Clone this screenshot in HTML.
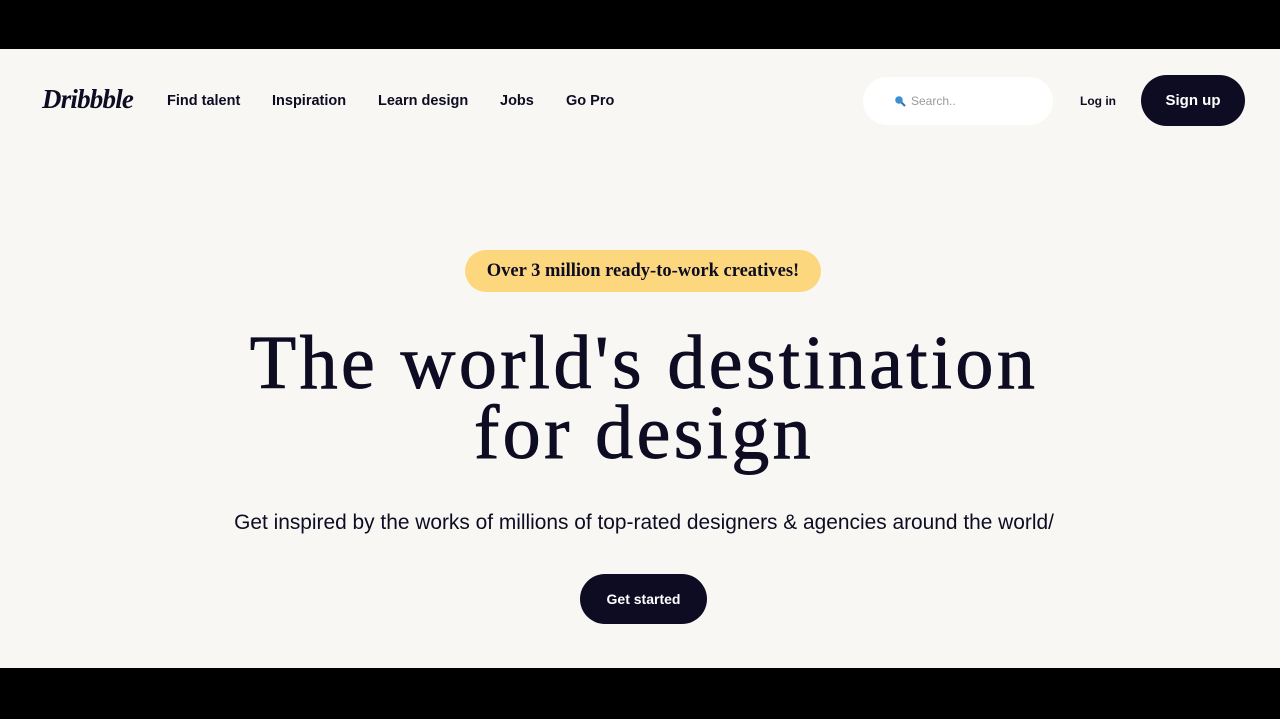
<!DOCTYPE html>
<html><head><style>
*{margin:0;padding:0;box-sizing:border-box}
body{width:1280px;height:719px;background:#000;position:relative;overflow:hidden;font-family:"Liberation Sans",sans-serif}
.page{position:absolute;top:49px;left:0;width:1280px;height:619px;background:#f8f7f4}
.logo{position:absolute;left:42px;top:35px;font-family:"Liberation Serif",serif;font-style:italic;font-weight:bold;font-size:27px;color:#0d0c22;letter-spacing:-0.8px}
.nav{position:absolute;top:44px;font-size:14.5px;font-weight:bold;color:#0d0c22}
.search{position:absolute;left:863px;top:28px;width:190px;height:48px;border-radius:24px;background:#fff}
.search span{position:absolute;left:48px;top:17px;font-size:12px;color:#9a9a9a}
.login{position:absolute;left:1080px;top:45px;font-size:12px;font-weight:bold;color:#0d0c22}
.signup{position:absolute;left:1141px;top:26px;width:104px;height:51px;border-radius:26px;background:#0d0c22;color:#fff;font-weight:bold;font-size:15px;text-align:center;line-height:51px}
.pill{position:absolute;left:465px;top:201px;width:356px;height:42px;border-radius:21px;background:#fdd77e;font-family:"Liberation Serif",serif;font-weight:bold;font-size:18.5px;color:#0d0c22;text-align:center;line-height:42px}
h1{position:absolute;left:4px;width:1280px;top:279px;text-align:center;font-family:"Liberation Serif",serif;font-weight:normal;font-size:76px;line-height:70px;color:#0d0c22;letter-spacing:3.4px;-webkit-text-stroke:0.9px #0d0c22}
.sub{position:absolute;left:0;width:1288px;top:462px;text-align:center;font-size:20.9px;color:#0d0c22}
.cta{position:absolute;left:580px;top:525px;width:127px;height:50px;border-radius:25px;background:#0d0c22;color:#fff;font-weight:bold;font-size:14px;text-align:center;line-height:50px}
</style></head><body>
<div class="page">
<div class="logo">Dribbble</div>
<div class="nav" style="left:167px">Find talent</div>
<div class="nav" style="left:272px">Inspiration</div>
<div class="nav" style="left:378px">Learn design</div>
<div class="nav" style="left:500px">Jobs</div>
<div class="nav" style="left:566px">Go Pro</div>
<div class="search"><svg style="position:absolute;left:31px;top:18px" width="12" height="12" viewBox="0 0 12 12"><circle cx="5" cy="5" r="3.8" fill="#3a8fd6"/><path d="M7.5 7.5L11 11" stroke="#3a6fa0" stroke-width="2"/></svg><span>Search..</span></div>
<div class="login">Log in</div>
<div class="signup">Sign up</div>
<div class="pill">Over 3 million ready-to-work creatives!</div>
<h1>The world's destination<br>for design</h1>
<div class="sub">Get inspired by the works of millions of top-rated designers &amp; agencies around the world/</div>
<div class="cta">Get started</div>
</div>
</body></html>
